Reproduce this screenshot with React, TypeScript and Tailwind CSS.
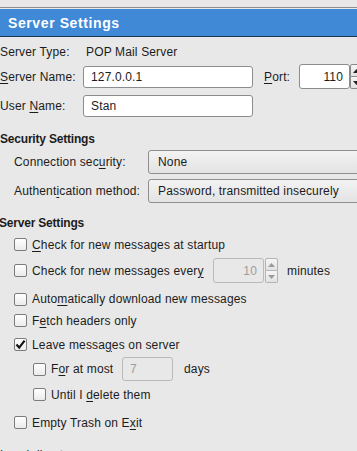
import React from 'react'

const U = ({ children }: { children: React.ReactNode }) => (
  <span className="underline underline-offset-[2px] decoration-[1px]">{children}</span>
)

const Check = ({ checked = false }: { checked?: boolean }) => (
  <span className="flex items-center justify-center w-[13px] h-[13px] shrink-0 border border-[#7c7c7c] rounded-[2px] bg-gradient-to-b from-white to-[#ebebeb]">
    {checked && (
      <svg width="11" height="11" viewBox="0 0 11 11">
        <path d="M1.5 5.5 L4.2 8.6 L9.6 1.6" fill="none" stroke="#111" strokeWidth="2.2" strokeLinejoin="miter" />
      </svg>
    )}
  </span>
)

const Spinner = ({ disabled = false }: { disabled?: boolean }) => {
  const arrow = disabled ? '#9a9a9a' : '#222'
  const border = disabled ? 'border-[#b4b4b4]' : 'border-[#8a8a8a]'
  return (
    <div className="flex flex-col w-[13px] h-[25px] shrink-0">
      <div className={`flex-1 flex items-center justify-center border rounded-t-[2px] bg-gradient-to-b from-[#f6f6f6] to-[#e2e2e2] ${border}`}>
        <svg width="7" height="4" viewBox="0 0 7 4"><path d="M0 4 L3.5 0 L7 4Z" fill={arrow} /></svg>
      </div>
      <div className={`flex-1 flex items-center justify-center border border-t-0 rounded-b-[2px] bg-gradient-to-b from-[#f6f6f6] to-[#e2e2e2] ${border}`}>
        <svg width="7" height="4" viewBox="0 0 7 4"><path d="M0 0 L3.5 4 L7 0Z" fill={arrow} /></svg>
      </div>
    </div>
  )
}

const CheckRow = ({ children, checked, indent = false, mt }: { children: React.ReactNode; checked?: boolean; indent?: boolean; mt: string }) => (
  <div className={`flex items-center h-[17px] gap-[5px] ${indent ? 'pl-[33px]' : 'pl-[14px]'} ${mt}`}>
    <Check checked={checked} />
    <span className="shrink-0">{children}</span>
  </div>
)

export default function App() {
  return (
    <div className="w-[357px] h-[451px] overflow-hidden whitespace-nowrap bg-[#e8e8e8] text-[#1c1c1c] font-['Liberation_Sans',Arial,sans-serif] text-[12px] tracking-[0.15px] leading-none">
      {/* title bar */}
      <div className="h-[7px]" />
      <div className="h-px bg-[#8e8e8e]" />
      <div className="h-px" />
      <div className="h-[27px] bg-[#4089d7] flex items-center pl-[8px]">
        <h1 className="text-white font-bold text-[14px] tracking-[0.6px]">Server Settings</h1>
      </div>
      <div className="h-px bg-[#1d3550]" />

      <div className="flex items-center h-[16px] mt-[7px]">
        <span className="w-[86px] shrink-0">Server Type:</span>
        <span>POP Mail Server</span>
      </div>

      <div className="flex items-center h-[25px] mt-[4px]">
        <span className="w-[83px] shrink-0"><U>S</U>erver Name:</span>
        <div className="w-[170px] h-[22px] shrink-0 bg-white border border-[#8c8c8c] rounded-[3px] flex items-center pl-[7px]">127.0.0.1</div>
        <span className="w-[35px] shrink-0 ml-[11px]"><U>P</U>ort:</span>
        <div className="w-[51px] h-[25px] shrink-0 bg-white border border-[#8c8c8c] rounded-[3px] flex items-center justify-end pr-[6px]">110</div>
        <Spinner />
      </div>

      <div className="flex items-center h-[22px] mt-[6px]">
        <span className="w-[83px] shrink-0">User <U>N</U>ame:</span>
        <div className="w-[170px] h-[22px] shrink-0 bg-white border border-[#8c8c8c] rounded-[3px] flex items-center pl-[7px]">Stan</div>
      </div>

      <div className="flex items-center h-[16px] mt-[14px] font-bold tracking-[-0.2px]">Security Settings</div>

      <div className="flex items-center h-[24px] mt-[3px] pl-[14px]">
        <span className="w-[134px] shrink-0">Connection sec<U>u</U>rity:</span>
        <div className="w-[230px] h-[24px] shrink-0 border border-[#8e8e8e] rounded-[3px] bg-gradient-to-b from-[#f3f3f3] to-[#e3e3e3] flex items-center pl-[9px]">None</div>
      </div>
      <div className="flex items-center h-[24px] mt-[5px] pl-[14px]">
        <span className="w-[134px] shrink-0">Authent<U>i</U>cation method:</span>
        <div className="w-[230px] h-[24px] shrink-0 border border-[#8e8e8e] rounded-[3px] bg-gradient-to-b from-[#f3f3f3] to-[#e3e3e3] flex items-center pl-[9px]">Password, transmitted insecurely</div>
      </div>

      <div className="flex items-center h-[16px] mt-[12px] -ml-[1px] font-bold tracking-[-0.2px]">Server Settings</div>

      <CheckRow mt="mt-[5px]"><U>C</U>heck for new messages at startup</CheckRow>

      <div className="flex items-center h-[25px] mt-[5px] pl-[14px]">
        <Check />
        <span className="ml-[5px] w-[181px] shrink-0">Check for new messages ever<U>y</U></span>
        <div className="w-[51px] h-[25px] shrink-0 border border-[#bababa] rounded-[3px] flex items-center justify-end pr-[6px] text-[#9c9c9c]">10</div>
        <div className="ml-[1px] shrink-0"><Spinner disabled /></div>
        <span className="ml-[9px] shrink-0">minutes</span>
      </div>

      <div className="flex items-center h-[18px] mt-[7px] gap-[5px] pl-[14px]">
        <Check />
        <span className="shrink-0">Auto<U>m</U>atically download new messages</span>
      </div>
      <CheckRow mt="mt-[4px]">F<U>e</U>tch headers only</CheckRow>
      <CheckRow mt="mt-[7px]" checked>Leave messa<U>g</U>es on server</CheckRow>

      <div className="flex items-center h-[24px] mt-[4px] pl-[33px]">
        <Check />
        <span className="ml-[5px] w-[71px] shrink-0">F<U>o</U>r at most</span>
        <div className="w-[51px] h-[24px] shrink-0 border border-[#bababa] rounded-[3px] flex items-center pl-[7px] text-[#9c9c9c]">7</div>
        <span className="ml-[11px] shrink-0">days</span>
      </div>

      <CheckRow mt="mt-[5px]" indent>Until I <U>d</U>elete them</CheckRow>
      <CheckRow mt="mt-[11px]">Empty Trash on E<U>x</U>it</CheckRow>

      <div className="flex items-center h-[16px] mt-[16px]">Local directory:</div>
    </div>
  )
}
